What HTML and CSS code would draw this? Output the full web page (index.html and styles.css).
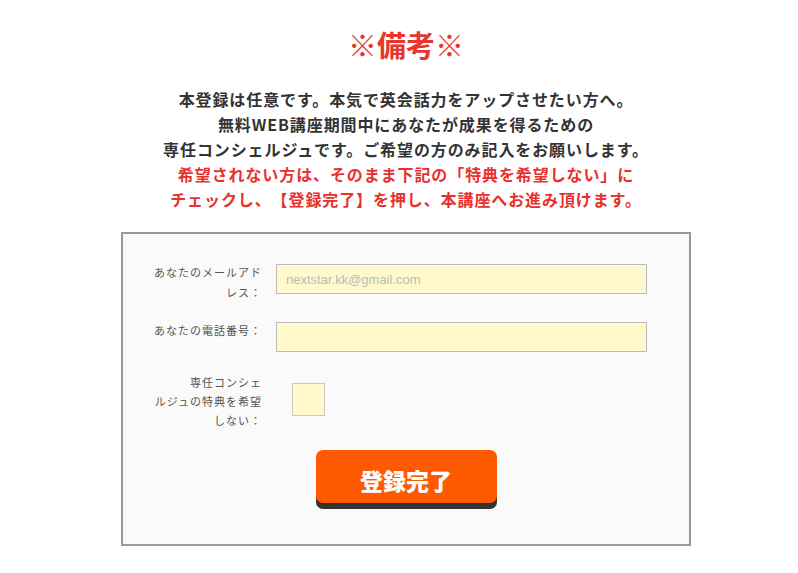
FILE: index.html
```html
<!DOCTYPE html>
<html lang="ja">
<head>
    <meta charset="UTF-8">
    <meta name="viewport" content="width=device-width, initial-scale=1.0">
    <title>備考</title>
    <link rel="stylesheet" href="styles.css">
</head>
<body>
    <div class="page">
        <h2 class="title">※備考※</h2>

        <p class="lead">
            本登録は任意です。本気で英会話力をアップさせたい方へ。<br>
            無料WEB講座期間中にあなたが成果を得るための<br>
            専任コンシェルジュです。ご希望の方のみ記入をお願いします。<br>
            <span class="red">希望されない方は、そのまま下記の「特典を希望しない」に<br>
            チェックし、【登録完了】を押し、本講座へお進み頂けます。</span>
        </p>

        <form class="form-box">
            <div class="row">
                <label class="label" for="mail">あなたのメールアド<br>レス：</label>
                <input class="field" type="text" id="mail" placeholder="nextstar.kk@gmail.com">
            </div>
            <div class="row row-tel">
                <label class="label" for="tel">あなたの電話番号：</label>
                <input class="field" type="text" id="tel">
            </div>
            <div class="row row-check">
                <label class="label label-check" for="nope">専任コンシェ<br>ルジュの特典を希望<br>しない：</label>
                <span class="check" id="nope"></span>
            </div>
            <div class="submit-wrap">
                <button type="button" class="submit">登録完了</button>
            </div>
        </form>
    </div>
</body>
</html>
```

FILE: styles.css
```css
body { margin: 0; padding: 0 0 0 14px; background: #fff; font-family: "Noto Sans CJK JP", "Noto Sans", sans-serif; color: #333; text-spacing-trim: space-all; }
.page { width: 570px; margin: 0 auto; text-align: center; }
.title { margin: 23px 0 0; font-size: 29px; line-height: 42px; font-weight: bold; color: #e8352d; letter-spacing: 0; }
.lead { margin: 22px 0 0; font-size: 16px; line-height: 25px; font-weight: bold; letter-spacing: 0.9px; color: #333; white-space: nowrap; }
.red { color: #e8302d; }

.form-box { margin-top: 20px; border: 2px solid #999; background: #fafafa; padding: 28px 42px 41px 0; text-align: left; }
.row { display: flex; align-items: flex-start; margin-bottom: 18px; }
.row-tel { margin-bottom: 21px; }
.label { width: 139px; flex: none; text-align: right; font-size: 11px; line-height: 20px; letter-spacing: 1px; color: #555; margin-right: 14px; }
.field { flex: 1; height: 30px; box-sizing: border-box; margin-top: 2px; padding: 0 9px; border: 1px solid #bbb; background: #fff9cc; font-family: "Liberation Sans", Arial, sans-serif; font-size: 13px; color: #333; outline: none; }
.field::placeholder { color: #bbb; }
.row-check { margin-bottom: 20px; }
.label-check { line-height: 19px; }
.check { display: block; width: 33px; height: 33px; box-sizing: border-box; margin: 10px 0 0 16px; border: 1px solid #c8c8c8; background: #fff9cc; }

.submit-wrap { text-align: center; padding-left: 42px; }
.submit { width: 181px; height: 53px; border: none; border-radius: 7px; background: #ff5a00; color: #fff; font-family: "Noto Sans CJK JP", sans-serif; font-size: 23px; font-weight: 900; letter-spacing: 0; padding-top: 8px; box-shadow: 0 6px 0 #333; cursor: pointer; }
```
